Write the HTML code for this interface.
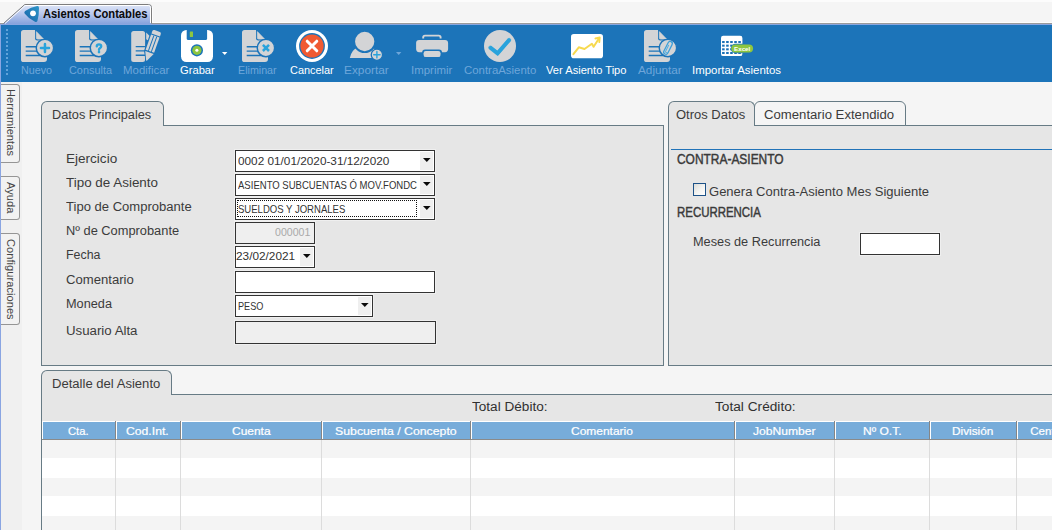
<!DOCTYPE html>
<html lang="es"><head><meta charset="utf-8"><title>Asientos Contables</title>
<style>
html,body{margin:0;padding:0}
body{width:1052px;height:530px;overflow:hidden;position:relative;background:#f5f5f5;font-family:"Liberation Sans",sans-serif;}
.t{position:absolute;white-space:nowrap;font-family:"Liberation Sans",sans-serif;}
.ic{position:absolute;overflow:visible}
.fld{position:absolute;border:1px solid #333;box-shadow:0 0 0 1px rgba(255,255,255,0.35)}
.panel{position:absolute;background:#e6e6e6;border:1px solid #677b85;box-sizing:border-box}
.tab{position:absolute;background:#e6e6e6;border:1px solid #677b85;border-bottom:none;box-sizing:border-box;border-radius:6px 6px 0 0}
.stab{position:absolute;left:1px;width:18px;background:#f2f2f2;border:1px solid #959595;border-left:none;border-radius:0 3.5px 3.5px 0;}
.stab span{position:absolute;left:14.9px;top:4.1px;transform-origin:0 0;transform:rotate(90deg);font-size:11px;line-height:11px;color:#444;white-space:nowrap;letter-spacing:0.08px}
</style></head><body>
<!-- top strip -->
<div style="position:absolute;left:0;top:0;width:1052px;height:2px;background:#fcfcfc"></div>
<div style="position:absolute;left:0;top:22px;width:1052px;height:1px;background:#fdfdfd"></div>
<div style="position:absolute;left:0;top:23px;width:1052px;height:1px;background:#9a9a9a"></div>
<svg style="position:absolute;left:0;top:0" width="160" height="25" viewBox="0 0 160 25">
<defs><linearGradient id="tg" x1="0" y1="0" x2="0" y2="1"><stop offset="0" stop-color="#dfe6f7"/><stop offset="0.45" stop-color="#bccaee"/><stop offset="1" stop-color="#86a2dc"/></linearGradient>
<linearGradient id="lg" x1="0" y1="1" x2="1" y2="0"><stop offset="0" stop-color="#1762a8"/><stop offset="1" stop-color="#2d97c9"/></linearGradient></defs>
<path d="M3,24 L24.5,4.5 H148.5 Q151.5,4.5 151.5,7.5 V24 Z" fill="url(#tg)"/>
<path d="M3.5,23.5 L24.8,4.5 H148.5 Q151.5,4.5 151.5,7.5 V23.5" fill="none" stroke="#7d7d7d" stroke-width="1"/>
<path d="M5,23.5 L25.2,5.5 H148.5 Q150.5,5.5 150.5,7.5 V23" fill="none" stroke="#fff" stroke-width="1"/>
<path d="M152.5,7 V22.5" fill="none" stroke="#fdfdfd" stroke-width="1"/>
<path d="M25.1,10.9 Q31,6.9 37.3,6 Q39.2,5.9 39,7.9 Q39.1,15 37.4,20.9 Q36.6,22.7 35,21.7 Q28.6,18.6 24.6,13.4 Q23.8,11.9 25.1,10.9 Z" fill="url(#lg)"/>
<circle cx="33" cy="13.3" r="2.9" fill="#fff"/>
</svg>
<!-- toolbar -->
<div style="position:absolute;left:0;top:24px;width:1052px;height:1px;background:#8aa6df"></div>
<div style="position:absolute;left:1px;top:25px;width:1051px;height:57px;background:#1c74b9"></div>
<div style="position:absolute;left:0;top:24px;width:1px;height:506px;background:#8aa5e2"></div>
<div style="position:absolute;left:6px;top:29px;width:2px;height:48px;background:repeating-linear-gradient(to bottom,#62a3da 0,#62a3da 2px,transparent 2px,transparent 4px)"></div>
<svg class="ic" style="left:21px;top:30px" width="34" height="32" viewBox="0 0 34 32">
<path d="M2.6,0 H14 V8.2 Q14,10.4 16.2,10.4 H26 V29 Q26,32 23,32 H2.6 Q0,32 0,29.4 V2.6 Q0,0 2.6,0 Z" fill="#d3d4d6"/>
<path d="M15.3,1.6 L15.3,7.7 Q15.3,9.1 16.7,9.1 L22.6,9.1 Z" fill="#d3d4d6" stroke="#d3d4d6" stroke-width="0.7" stroke-linejoin="round"/>
<g stroke="#1c74b9" stroke-width="1.4"><path d="M4.7,16.8 H20 M4.7,21.1 H20 M4.7,25.5 H20"/></g>
<circle cx="23.95" cy="17.95" r="8.7" fill="#d3d4d6" stroke="#1c74b9" stroke-width="1.5"/>
<path d="M19.9,17.95 H28 M23.95,13.9 V22" stroke="#29a3dc" stroke-width="2.5" stroke-linecap="round"/>
</svg>
<svg class="ic" style="left:75px;top:30px" width="34" height="32" viewBox="0 0 34 32">
<path d="M2.6,0 H14 V8.2 Q14,10.4 16.2,10.4 H26 V29 Q26,32 23,32 H2.6 Q0,32 0,29.4 V2.6 Q0,0 2.6,0 Z" fill="#d3d4d6"/>
<path d="M15.3,1.6 L15.3,7.7 Q15.3,9.1 16.7,9.1 L22.6,9.1 Z" fill="#d3d4d6" stroke="#d3d4d6" stroke-width="0.7" stroke-linejoin="round"/>
<g stroke="#1c74b9" stroke-width="1.4"><path d="M4.7,16.8 H20 M4.7,21.1 H20 M4.7,25.5 H20"/></g>
<circle cx="23.95" cy="17.95" r="8.7" fill="#d3d4d6" stroke="#1c74b9" stroke-width="1.5"/>
<path d="M21.8,16.3 Q21.8,14.4 24,14.4 Q26.2,14.4 26.2,16.2 Q26.2,17.3 25.1,18 Q24,18.7 24,19.7" fill="none" stroke="#29a3dc" stroke-width="2.4" stroke-linecap="round"/><circle cx="24" cy="22.1" r="1.3" fill="#29a3dc"/>
</svg>
<svg class="ic" style="left:130px;top:30px" width="34" height="34" viewBox="0 0 34 34">
<rect x="1.2" y="0.9" width="13.9" height="31.2" rx="2.5" fill="#d3d4d6"/>
<path d="M16.2,2.5 V8.6 Q16.2,10.3 17.9,10.3 H24 Z" fill="#d3d4d6"/>
<g stroke="#1c74b9" stroke-width="1.4"><path d="M5.7,16.6 H15.2 M5.7,20.9 H15.2 M5.7,25.3 H15.2"/></g>
<g transform="translate(27.15,1.0) rotate(19.7)">
<path d="M-5.7,-1.4 H5.7 V23 L0,33.6 L-5.7,23 Z" fill="#1c74b9"/>
<path d="M-4.5,4.2 V1.7 Q-4.5,0 -2.8,0 H2.8 Q4.5,0 4.5,1.7 V4.2 Z" fill="#d3d4d6"/>
<rect x="-4.5" y="5.4" width="9" height="16.2" fill="#d3d4d6"/>
<path d="M-1.55,5.4 V21.6 M1.55,5.4 V21.6" stroke="#1c74b9" stroke-width="1"/>
<path d="M-4.5,22.8 H4.5 L0.5,31.2 Q0,32.2 -0.5,31.2 Z" fill="#d3d4d6"/>
</g>
</svg>
<svg class="ic" style="left:181px;top:30px" width="32" height="32" viewBox="0 0 32 32">
<rect x="0" y="0" width="32" height="32" rx="5.4" fill="#fff"/>
<path d="M5.7,-1 H26.1 V8.8 Q26.1,9.9 25,9.9 H6.8 Q5.7,9.9 5.7,8.8 Z" fill="#1c74b9"/>
<rect x="8.8" y="1.6" width="3.2" height="5.4" rx="0.5" fill="#8cc63f"/>
<circle cx="15.9" cy="20.3" r="6.1" fill="#1c74b9"/>
<circle cx="15.9" cy="20.3" r="4.6" fill="#8cc63f"/>
<circle cx="15.9" cy="20.3" r="1.55" fill="#fff"/>
</svg>
<svg class="ic" style="left:222px;top:52px" width="6" height="3" viewBox="0 0 6 3"><path d="M0,0 H5.4 L2.7,3 Z" fill="#fff"/></svg>
<svg class="ic" style="left:242px;top:30px" width="34" height="32" viewBox="0 0 34 32">
<path d="M2.6,0 H14 V8.2 Q14,10.4 16.2,10.4 H26 V29 Q26,32 23,32 H2.6 Q0,32 0,29.4 V2.6 Q0,0 2.6,0 Z" fill="#d3d4d6"/>
<path d="M15.3,1.6 L15.3,7.7 Q15.3,9.1 16.7,9.1 L22.6,9.1 Z" fill="#d3d4d6" stroke="#d3d4d6" stroke-width="0.7" stroke-linejoin="round"/>
<g stroke="#1c74b9" stroke-width="1.4"><path d="M4.7,16.8 H20 M4.7,21.1 H20 M4.7,25.5 H20"/></g>
<circle cx="23.95" cy="17.95" r="8.7" fill="#d3d4d6" stroke="#1c74b9" stroke-width="1.5"/>
<path d="M20.9,14.9 L27,21 M27,14.9 L20.9,21" stroke="#29a3dc" stroke-width="2.5" stroke-linecap="butt"/>
</svg>
<svg class="ic" style="left:296px;top:30px" width="32" height="32" viewBox="0 0 32 32">
<circle cx="16" cy="16" r="16" fill="#fff"/>
<circle cx="16" cy="16" r="12.9" fill="#1c74b9"/>
<circle cx="16" cy="16" r="11.6" fill="#f05a32"/>
<path d="M11.2,11.2 L20.8,20.8 M20.8,11.2 L11.2,20.8" stroke="#fff" stroke-width="3.0" stroke-linecap="round"/>
</svg>
<svg class="ic" style="left:349px;top:30px" width="34" height="32" viewBox="0 0 34 32">
<path d="M0.8,28 Q2.3,20 8.3,17.4 Q12,16 15.7,16 Q19.4,16 23.1,17.4 Q29.1,20 30.6,28 Z" fill="#d3d4d6"/>
<circle cx="15.7" cy="11.5" r="10.6" fill="#d3d4d6" stroke="#1c74b9" stroke-width="1.9"/>
<circle cx="27.9" cy="24.7" r="5.65" fill="#d3d4d6" stroke="#1c74b9" stroke-width="1.3"/>
<path d="M24.7,24.7 H31.1 M27.9,21.5 V27.9" stroke="#29a3dc" stroke-width="1.4" stroke-linecap="round"/>
</svg>
<svg class="ic" style="left:396px;top:52px" width="6" height="3" viewBox="0 0 6 3"><path d="M0,0 H5.4 L2.7,3 Z" fill="#6ea6da"/></svg>
<svg class="ic" style="left:416px;top:30px" width="33" height="32" viewBox="0 0 33 32">
<path d="M7.2,8.4 V7.4 Q7.2,5.6 9,5.6 H22.8 Q24.6,5.6 24.6,7.4 V8.4" fill="none" stroke="#d3d4d6" stroke-width="1.9"/>
<rect x="0.1" y="9.9" width="32" height="12.3" rx="3.1" fill="#d3d4d6"/>
<rect x="6.1" y="19.5" width="19.9" height="9.2" rx="3" fill="#1c74b9"/>
<rect x="7.6" y="21" width="16.9" height="6.1" rx="2.2" fill="#d3d4d6"/>
</svg>
<svg class="ic" style="left:484px;top:30px" width="32" height="32" viewBox="0 0 32 32">
<circle cx="16" cy="16" r="16" fill="#d3d4d6"/>
<path d="M6.3,17.6 L13.6,23.3 L25.2,9.9" fill="none" stroke="#29a3dc" stroke-width="2.6" stroke-linejoin="miter" stroke-linecap="square"/>
<path d="M6.3,17.6 L13.6,23.3 L25.2,9.9" fill="none" stroke="#29a3dc" stroke-width="4" stroke-linejoin="round" stroke-linecap="round" stroke-opacity="0.55"/>
<path d="M5.9,17.3 L13.6,23.3 L25.6,9.4" fill="none" stroke="#29a3dc" stroke-width="3.8" stroke-linejoin="miter" stroke-linecap="butt"/>
</svg>
<svg class="ic" style="left:571px;top:30px" width="32" height="32" viewBox="0 0 32 32">
<rect x="0" y="4" width="32" height="24.2" rx="2.8" fill="#fff"/>
<path d="M2.4,24.2 L7.8,17.3 L13.5,19 L20.9,13.8 L22.6,16.8 L28.1,8.3" fill="none" stroke="#f7d94e" stroke-width="2.0" stroke-linecap="round" stroke-linejoin="round"/>
<path d="M24.4,8.5 L28.7,7.5 L28.3,12.1" fill="none" stroke="#f7d94e" stroke-width="1.9" stroke-linecap="round" stroke-linejoin="round"/>
</svg>
<svg class="ic" style="left:644px;top:30px" width="34" height="32" viewBox="0 0 34 32">
<path d="M2.6,0 H14 V8.2 Q14,10.4 16.2,10.4 H26 V29 Q26,32 23,32 H2.6 Q0,32 0,29.4 V2.6 Q0,0 2.6,0 Z" fill="#d3d4d6"/>
<path d="M15.3,1.6 L15.3,7.7 Q15.3,9.1 16.7,9.1 L22.6,9.1 Z" fill="#d3d4d6" stroke="#d3d4d6" stroke-width="0.7" stroke-linejoin="round"/>
<g stroke="#1c74b9" stroke-width="1.4"><path d="M4.7,16.8 H20 M4.7,21.1 H20 M4.7,25.5 H20"/></g>
<circle cx="23.95" cy="17.95" r="8.7" fill="#d3d4d6" stroke="#1c74b9" stroke-width="1.5"/>
<g transform="translate(24.0,17.85) rotate(26.6)" fill="none" stroke-linecap="round"><rect x="-2.2" y="-6.9" width="4.4" height="13.8" rx="2.2" stroke="#3a9fda" stroke-width="1.25"/><path d="M-0.6,-2.6 V4.2 A1.05,1.05 0 0 0 1.3,4.6" stroke="#55addf" stroke-width="1.0"/></g>
</svg>
<svg class="ic" style="left:721px;top:30px" width="34" height="32" viewBox="0 0 34 32">
<rect x="0" y="5.8" width="21.4" height="20.3" rx="2.2" fill="#fff"/>
<rect x="1.10" y="11.00" width="2.55" height="2.05" fill="#1a70b6"/><rect x="5.15" y="11.00" width="2.55" height="2.05" fill="#1a70b6"/><rect x="9.20" y="11.00" width="2.55" height="2.05" fill="#1a70b6"/><rect x="13.25" y="11.00" width="2.55" height="2.05" fill="#1a70b6"/><rect x="17.30" y="11.00" width="2.55" height="2.05" fill="#1a70b6"/><rect x="1.10" y="14.65" width="2.55" height="2.05" fill="#1a70b6"/><rect x="5.15" y="14.65" width="2.55" height="2.05" fill="#1a70b6"/><rect x="9.20" y="14.65" width="2.55" height="2.05" fill="#1a70b6"/><rect x="13.25" y="14.65" width="2.55" height="2.05" fill="#1a70b6"/><rect x="17.30" y="14.65" width="2.55" height="2.05" fill="#1a70b6"/><rect x="1.10" y="18.30" width="2.55" height="2.05" fill="#1a70b6"/><rect x="5.15" y="18.30" width="2.55" height="2.05" fill="#1a70b6"/><rect x="9.20" y="18.30" width="2.55" height="2.05" fill="#1a70b6"/><rect x="13.25" y="18.30" width="2.55" height="2.05" fill="#1a70b6"/><rect x="17.30" y="18.30" width="2.55" height="2.05" fill="#1a70b6"/><rect x="1.10" y="21.95" width="2.55" height="2.05" fill="#1a70b6"/><rect x="5.15" y="21.95" width="2.55" height="2.05" fill="#1a70b6"/><rect x="9.20" y="21.95" width="2.55" height="2.05" fill="#1a70b6"/><rect x="13.25" y="21.95" width="2.55" height="2.05" fill="#1a70b6"/><rect x="17.30" y="21.95" width="2.55" height="2.05" fill="#1a70b6"/>
<rect x="9.7" y="13.8" width="23" height="9.4" rx="4.7" fill="#1c74b9"/>
<rect x="10.3" y="14.4" width="21.8" height="8.2" rx="4.1" fill="#8dc63f"/>
<text x="21.2" y="20.6" font-family="Liberation Sans, sans-serif" font-size="6.2" font-weight="bold" fill="#fff" text-anchor="middle">Excel</text>
</svg>
<!-- sidebar -->
<div style="position:absolute;left:1px;top:82px;width:21px;height:448px;background:#f0f0f0"></div>
<div class="stab" style="top:84px;height:77px"><span style="top:4.1px">Herramientas</span></div><div class="stab" style="top:176px;height:42px"><span style="top:4.6px">Ayuda</span></div><div class="stab" style="top:233px;height:90px"><span style="top:4.9px">Configuraciones</span></div>
<!-- left panel -->
<div class="panel" style="left:41px;top:125px;width:623px;height:241px"></div>
<div class="tab" style="left:41px;top:101px;width:123px;height:25px"></div>
<!-- right panel -->
<div class="panel" style="left:668px;top:125px;width:400px;height:241px"></div>
<div class="tab" style="left:754px;top:101px;width:152px;height:25px;background:#f5f5f5;border-bottom:1px solid #677b85"></div>
<div class="tab" style="left:668px;top:101px;width:87px;height:25px"></div>
<div style="position:absolute;left:671px;top:149px;width:400px;height:1px;background:#2173b8"></div>
<!-- checkbox -->
<div style="position:absolute;left:693px;top:183px;width:11px;height:11px;border:1px solid #1d5288;background:linear-gradient(135deg,#dcdcd8 0%,#f4f4f2 55%,#ffffff 100%)"></div>
<div class="fld" style="left:860px;top:233px;width:78px;height:20px;background:#fff"></div>
<!-- fields -->
<div class="fld" style="left:235px;top:150px;width:198px;height:20px;background:#fff"><i style="position:absolute;right:1px;top:1px;bottom:1px;width:13px;background:#efefef"></i><svg style="position:absolute;right:3.4px;top:7.4px" width="8" height="4" viewBox="0 0 8 4"><path d="M0,0 H7.6 L3.8,4 Z" fill="#0a0a0a"/></svg></div>
<div class="fld" style="left:235px;top:174px;width:198px;height:20px;background:#fff"><i style="position:absolute;right:1px;top:1px;bottom:1px;width:13px;background:#efefef"></i><svg style="position:absolute;right:3.4px;top:7.4px" width="8" height="4" viewBox="0 0 8 4"><path d="M0,0 H7.6 L3.8,4 Z" fill="#0a0a0a"/></svg></div>
<div class="fld" style="left:235px;top:198px;width:198px;height:20px;background:#fff"><i style="position:absolute;right:1px;top:1px;bottom:1px;width:13px;background:#efefef"></i><svg style="position:absolute;right:3.4px;top:7.4px" width="8" height="4" viewBox="0 0 8 4"><path d="M0,0 H7.6 L3.8,4 Z" fill="#0a0a0a"/></svg><i style="position:absolute;left:1px;top:1px;width:180px;height:17px;border:1px dotted #111;box-sizing:border-box"></i></div>
<div class="fld" style="left:235px;top:222px;width:78px;height:20px;background:#efefef"></div>
<div class="fld" style="left:235px;top:246px;width:78px;height:20px;background:#fff"><i style="position:absolute;right:1px;top:1px;bottom:1px;width:13px;background:#efefef"></i><svg style="position:absolute;right:3.4px;top:7.4px" width="8" height="4" viewBox="0 0 8 4"><path d="M0,0 H7.6 L3.8,4 Z" fill="#0a0a0a"/></svg></div>
<div class="fld" style="left:235px;top:271px;width:198px;height:20px;background:#fff"></div>
<div class="fld" style="left:235px;top:295px;width:136px;height:20px;background:#fff"><i style="position:absolute;right:1px;top:1px;bottom:1px;width:13px;background:#efefef"></i><svg style="position:absolute;right:3.4px;top:7.4px" width="8" height="4" viewBox="0 0 8 4"><path d="M0,0 H7.6 L3.8,4 Z" fill="#0a0a0a"/></svg></div>
<div class="fld" style="left:235px;top:321px;width:199px;height:21px;background:#efefef"></div>
<!-- bottom panel -->
<div class="panel" style="left:41px;top:394px;width:1030px;height:160px"></div>
<div class="tab" style="left:41px;top:370px;width:131px;height:25px"></div>
<div style="position:absolute;left:42px;top:440px;width:1010px;height:90px;background:#fff"></div>
<div style="position:absolute;left:42px;top:440px;width:1010px;height:18px;background:#f4f4f4"></div><div style="position:absolute;left:42px;top:478px;width:1010px;height:18px;background:#f4f4f4"></div><div style="position:absolute;left:42px;top:516px;width:1010px;height:18px;background:#f4f4f4"></div>
<div style="position:absolute;left:42px;top:439px;width:1010px;height:1px;background:#8a8a8a"></div>
<div style="position:absolute;left:42px;top:421px;width:73px;height:18px;background:#77acda;border-left:1px solid #fff;border-top:1px solid #fff;box-sizing:border-box"></div><div style="position:absolute;left:115px;top:421px;width:1px;height:19px;background:#858585"></div><div style="position:absolute;left:115px;top:440px;width:1px;height:90px;background:#dcdcdc"></div><div style="position:absolute;left:116px;top:421px;width:64px;height:18px;background:#77acda;border-left:1px solid #fff;border-top:1px solid #fff;box-sizing:border-box"></div><div style="position:absolute;left:180px;top:421px;width:1px;height:19px;background:#858585"></div><div style="position:absolute;left:180px;top:440px;width:1px;height:90px;background:#dcdcdc"></div><div style="position:absolute;left:181px;top:421px;width:140px;height:18px;background:#77acda;border-left:1px solid #fff;border-top:1px solid #fff;box-sizing:border-box"></div><div style="position:absolute;left:321px;top:421px;width:1px;height:19px;background:#858585"></div><div style="position:absolute;left:321px;top:440px;width:1px;height:90px;background:#dcdcdc"></div><div style="position:absolute;left:322px;top:421px;width:148px;height:18px;background:#77acda;border-left:1px solid #fff;border-top:1px solid #fff;box-sizing:border-box"></div><div style="position:absolute;left:470px;top:421px;width:1px;height:19px;background:#858585"></div><div style="position:absolute;left:470px;top:440px;width:1px;height:90px;background:#dcdcdc"></div><div style="position:absolute;left:471px;top:421px;width:263px;height:18px;background:#77acda;border-left:1px solid #fff;border-top:1px solid #fff;box-sizing:border-box"></div><div style="position:absolute;left:734px;top:421px;width:1px;height:19px;background:#858585"></div><div style="position:absolute;left:734px;top:440px;width:1px;height:90px;background:#dcdcdc"></div><div style="position:absolute;left:735px;top:421px;width:99px;height:18px;background:#77acda;border-left:1px solid #fff;border-top:1px solid #fff;box-sizing:border-box"></div><div style="position:absolute;left:834px;top:421px;width:1px;height:19px;background:#858585"></div><div style="position:absolute;left:834px;top:440px;width:1px;height:90px;background:#dcdcdc"></div><div style="position:absolute;left:835px;top:421px;width:94px;height:18px;background:#77acda;border-left:1px solid #fff;border-top:1px solid #fff;box-sizing:border-box"></div><div style="position:absolute;left:929px;top:421px;width:1px;height:19px;background:#858585"></div><div style="position:absolute;left:929px;top:440px;width:1px;height:90px;background:#dcdcdc"></div><div style="position:absolute;left:930px;top:421px;width:86px;height:18px;background:#77acda;border-left:1px solid #fff;border-top:1px solid #fff;box-sizing:border-box"></div><div style="position:absolute;left:1016px;top:421px;width:1px;height:19px;background:#858585"></div><div style="position:absolute;left:1016px;top:440px;width:1px;height:90px;background:#dcdcdc"></div><div style="position:absolute;left:1017px;top:421px;width:102px;height:18px;background:#77acda;border-left:1px solid #fff;border-top:1px solid #fff;box-sizing:border-box"></div><div style="position:absolute;left:1119px;top:421px;width:1px;height:19px;background:#858585"></div><div style="position:absolute;left:1119px;top:440px;width:1px;height:90px;background:#dcdcdc"></div>
<span id="l_nuevo" class="t" style="left:21.20px;top:65.00px;font-size:11px;line-height:11px;color:#6ea6da;letter-spacing:0.000px;transform-origin:0 0;transform:scaleX(0.9781);">Nuevo</span>
<span id="l_consulta" class="t" style="left:69.00px;top:65.00px;font-size:11px;line-height:11px;color:#6ea6da;letter-spacing:0.000px;transform-origin:0 0;transform:scaleX(0.9903);">Consulta</span>
<span id="l_modificar" class="t" style="left:122.70px;top:65.00px;font-size:11px;line-height:11px;color:#6ea6da;letter-spacing:0.000px;transform-origin:0 0;transform:scaleX(1.0398);">Modificar</span>
<span id="l_grabar" class="t" style="left:179.70px;top:65.00px;font-size:11px;line-height:11px;color:#fff;letter-spacing:0.000px;transform-origin:0 0;transform:scaleX(1.0161);">Grabar</span>
<span id="l_eliminar" class="t" style="left:238.10px;top:65.00px;font-size:11px;line-height:11px;color:#6ea6da;letter-spacing:0.000px;transform-origin:0 0;transform:scaleX(0.9715);">Eliminar</span>
<span id="l_cancelar" class="t" style="left:290.00px;top:65.00px;font-size:11px;line-height:11px;color:#fff;letter-spacing:0.000px;transform-origin:0 0;transform:scaleX(0.9925);">Cancelar</span>
<span id="l_exportar" class="t" style="left:344.20px;top:65.00px;font-size:11px;line-height:11px;color:#6ea6da;letter-spacing:0.000px;transform-origin:0 0;transform:scaleX(1.0751);">Exportar</span>
<span id="l_imprimir" class="t" style="left:411.20px;top:65.00px;font-size:11px;line-height:11px;color:#6ea6da;letter-spacing:0.000px;transform-origin:0 0;transform:scaleX(1.0398);">Imprimir</span>
<span id="l_contra" class="t" style="left:464.20px;top:65.00px;font-size:11px;line-height:11px;color:#6ea6da;letter-spacing:0.000px;transform-origin:0 0;transform:scaleX(1.0370);">ContraAsiento</span>
<span id="l_ver" class="t" style="left:546.10px;top:65.00px;font-size:11px;line-height:11px;color:#fff;letter-spacing:0.000px;transform-origin:0 0;transform:scaleX(1.0126);">Ver Asiento Tipo</span>
<span id="l_adjuntar" class="t" style="left:638.20px;top:65.00px;font-size:11px;line-height:11px;color:#6ea6da;letter-spacing:0.000px;transform-origin:0 0;transform:scaleX(1.0687);">Adjuntar</span>
<span id="l_importar" class="t" style="left:692.30px;top:65.00px;font-size:11px;line-height:11px;color:#fff;letter-spacing:0.000px;transform-origin:0 0;transform:scaleX(1.0398);">Importar Asientos</span>
<span id="t_win" class="t" style="left:42.80px;top:8.00px;font-size:12px;line-height:12px;color:#0a0a0a;letter-spacing:0.000px;font-weight:bold;transform-origin:0 0;transform:scaleX(0.9328);">Asientos Contables</span>
<span id="t_datos" class="t" style="left:51.90px;top:109.00px;font-size:12px;line-height:12px;color:#3b3b3b;letter-spacing:0.000px;transform-origin:0 0;transform:scaleX(1.0624);">Datos Principales</span>
<span id="t_otros" class="t" style="left:676.00px;top:109.00px;font-size:12px;line-height:12px;color:#3b3b3b;letter-spacing:0.000px;transform-origin:0 0;transform:scaleX(1.0807);">Otros Datos</span>
<span id="t_coment" class="t" style="left:764.10px;top:109.00px;font-size:12px;line-height:12px;color:#3b3b3b;letter-spacing:0.000px;transform-origin:0 0;transform:scaleX(1.0957);">Comentario Extendido</span>
<span id="t_detalle" class="t" style="left:51.80px;top:378.00px;font-size:12px;line-height:12px;color:#3b3b3b;letter-spacing:0.000px;transform-origin:0 0;transform:scaleX(1.0895);">Detalle del Asiento</span>
<span id="f_ejer" class="t" style="left:66.20px;top:153.00px;font-size:12px;line-height:12px;color:#3b3b3b;letter-spacing:0.000px;transform-origin:0 0;transform:scaleX(1.1288);">Ejercicio</span>
<span id="f_tasi" class="t" style="left:66.00px;top:177.00px;font-size:12px;line-height:12px;color:#3b3b3b;letter-spacing:0.000px;transform-origin:0 0;transform:scaleX(1.1181);">Tipo de Asiento</span>
<span id="f_tcom" class="t" style="left:66.00px;top:201.00px;font-size:12px;line-height:12px;color:#3b3b3b;letter-spacing:0.000px;transform-origin:0 0;transform:scaleX(1.0871);">Tipo de Comprobante</span>
<span id="f_ncom" class="t" style="left:66.00px;top:225.00px;font-size:12px;line-height:12px;color:#3b3b3b;letter-spacing:0.000px;transform-origin:0 0;transform:scaleX(1.0692);">Nº de Comprobante</span>
<span id="f_fecha" class="t" style="left:66.00px;top:249.00px;font-size:12px;line-height:12px;color:#3b3b3b;letter-spacing:0.000px;transform-origin:0 0;transform:scaleX(1.0312);">Fecha</span>
<span id="f_com" class="t" style="left:66.00px;top:274.00px;font-size:12px;line-height:12px;color:#3b3b3b;letter-spacing:0.000px;transform-origin:0 0;transform:scaleX(1.0930);">Comentario</span>
<span id="f_mon" class="t" style="left:65.50px;top:298.00px;font-size:12px;line-height:12px;color:#3b3b3b;letter-spacing:0.000px;transform-origin:0 0;transform:scaleX(1.0605);">Moneda</span>
<span id="f_usu" class="t" style="left:66.00px;top:325.00px;font-size:12px;line-height:12px;color:#3b3b3b;letter-spacing:0.000px;transform-origin:0 0;transform:scaleX(1.1050);">Usuario Alta</span>
<span id="r_contra" class="t" style="left:676.90px;top:152.00px;font-size:14px;line-height:14px;color:#3a3a3a;letter-spacing:0.000px;transform-origin:0 0;transform:scaleX(0.8529);-webkit-text-stroke:0.45px #3a3a3a;">CONTRA-ASIENTO</span>
<span id="r_genera" class="t" style="left:708.90px;top:186.00px;font-size:12px;line-height:12px;color:#3b3b3b;letter-spacing:0.000px;transform-origin:0 0;transform:scaleX(1.0854);">Genera Contra-Asiento Mes Siguiente</span>
<span id="r_recur" class="t" style="left:676.90px;top:205.00px;font-size:14px;line-height:14px;color:#3a3a3a;letter-spacing:0.000px;transform-origin:0 0;transform:scaleX(0.8170);-webkit-text-stroke:0.45px #3a3a3a;">RECURRENCIA</span>
<span id="r_meses" class="t" style="left:692.80px;top:236.00px;font-size:12px;line-height:12px;color:#3b3b3b;letter-spacing:0.000px;transform-origin:0 0;transform:scaleX(1.0611);">Meses de Recurrencia</span>
<span id="g_tdeb" class="t" style="left:471.70px;top:401.00px;font-size:12px;line-height:12px;color:#303030;letter-spacing:0.000px;transform-origin:0 0;transform:scaleX(1.1319);">Total Débito:</span>
<span id="g_tcre" class="t" style="left:714.50px;top:401.00px;font-size:12px;line-height:12px;color:#303030;letter-spacing:0.000px;transform-origin:0 0;transform:scaleX(1.1400);">Total Crédito:</span>
<span id="v_ejer" class="t" style="left:237.80px;top:156.00px;font-size:10.5px;line-height:10.5px;color:#333;letter-spacing:0.000px;transform-origin:0 0;transform:scaleX(1.1218);">0002 01/01/2020-31/12/2020</span>
<span id="v_tasi" class="t" style="left:237.50px;top:180.00px;font-size:10.5px;line-height:10.5px;color:#333;letter-spacing:0.000px;transform-origin:0 0;transform:scaleX(0.9086);">ASIENTO SUBCUENTAS Ó MOV.FONDC</span>
<span id="v_tcom" class="t" style="left:237.50px;top:204.00px;font-size:10.5px;line-height:10.5px;color:#333;letter-spacing:0.000px;transform-origin:0 0;transform:scaleX(0.9087);">SUELDOS Y JORNALES</span>
<span id="v_ncom" class="t" style="left:274.80px;top:227.00px;font-size:10.5px;line-height:10.5px;color:#a9a9a9;letter-spacing:0.000px;transform-origin:0 0;transform:scaleX(1.0072);">000001</span>
<span id="v_fecha" class="t" style="left:236.10px;top:251.00px;font-size:10.5px;line-height:10.5px;color:#333;letter-spacing:0.000px;transform-origin:0 0;transform:scaleX(1.1244);">23/02/2021</span>
<span id="v_mon" class="t" style="left:238.00px;top:301.00px;font-size:10.5px;line-height:10.5px;color:#333;letter-spacing:0.000px;transform-origin:0 0;transform:scaleX(0.8702);">PESO</span>
<span id="h_cta" class="t" style="left:68.10px;top:426.00px;font-size:11.5px;line-height:11.5px;color:#fff;letter-spacing:0.000px;transform-origin:0 0;transform:scaleX(0.9766);-webkit-text-stroke:0.22px #fff;">Cta.</span>
<span id="h_cod" class="t" style="left:126.10px;top:426.00px;font-size:11.5px;line-height:11.5px;color:#fff;letter-spacing:0.000px;transform-origin:0 0;transform:scaleX(1.0600);-webkit-text-stroke:0.22px #fff;">Cod.Int.</span>
<span id="h_cuenta" class="t" style="left:231.60px;top:426.00px;font-size:11.5px;line-height:11.5px;color:#fff;letter-spacing:0.000px;transform-origin:0 0;transform:scaleX(1.0406);-webkit-text-stroke:0.22px #fff;">Cuenta</span>
<span id="h_sub" class="t" style="left:334.80px;top:426.00px;font-size:11.5px;line-height:11.5px;color:#fff;letter-spacing:0.000px;transform-origin:0 0;transform:scaleX(1.0693);-webkit-text-stroke:0.22px #fff;">Subcuenta / Concepto</span>
<span id="h_com" class="t" style="left:571.10px;top:426.00px;font-size:11.5px;line-height:11.5px;color:#fff;letter-spacing:0.000px;transform-origin:0 0;transform:scaleX(1.0412);-webkit-text-stroke:0.22px #fff;">Comentario</span>
<span id="h_job" class="t" style="left:752.60px;top:426.00px;font-size:11.5px;line-height:11.5px;color:#fff;letter-spacing:0.000px;transform-origin:0 0;transform:scaleX(1.0529);-webkit-text-stroke:0.22px #fff;">JobNumber</span>
<span id="h_not" class="t" style="left:862.50px;top:426.00px;font-size:11.5px;line-height:11.5px;color:#fff;letter-spacing:0.000px;transform-origin:0 0;transform:scaleX(1.0463);-webkit-text-stroke:0.22px #fff;">Nº O.T.</span>
<span id="h_div" class="t" style="left:952.10px;top:426.00px;font-size:11.5px;line-height:11.5px;color:#fff;letter-spacing:0.000px;transform-origin:0 0;transform:scaleX(1.0282);-webkit-text-stroke:0.22px #fff;">División</span>
<span id="h_cen" class="t" style="left:1030.30px;top:426.00px;font-size:11.5px;line-height:11.5px;color:#fff;letter-spacing:0.000px;-webkit-text-stroke:0.22px #fff;">Centro</span>
</body></html>
